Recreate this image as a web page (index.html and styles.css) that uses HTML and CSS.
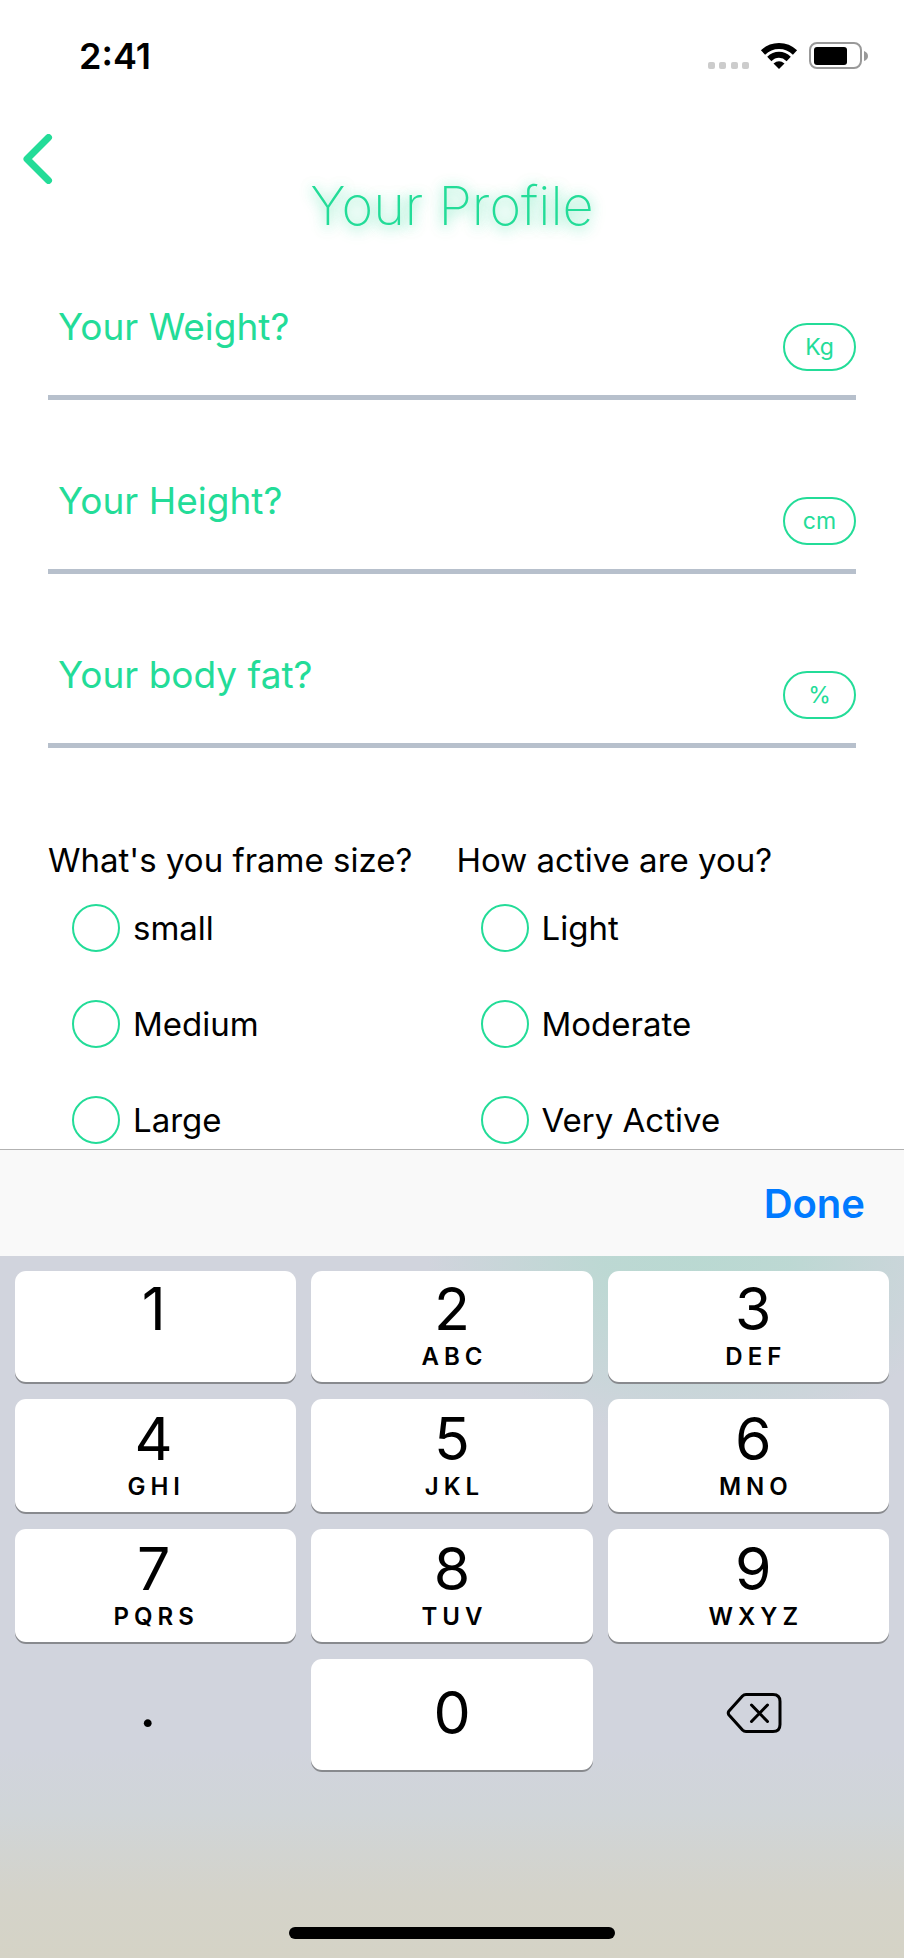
FILE: index.html
```html
<!DOCTYPE html>
<html lang="en">
<head>
<meta charset="utf-8">
<meta name="viewport" content="width=device-width, initial-scale=1">
<title>Your Profile</title>
<link rel="stylesheet" href="styles.css">
</head>
<body>
<div class="screen">
  <header class="status-bar">
    <time class="clock">2:41</time>
    <div class="status-icons">
      <svg class="signal" viewBox="0 0 41 7" width="41" height="7" aria-hidden="true">
        <rect width="7" height="7" rx="2"/><rect x="11" width="7" height="7" rx="2"/><rect x="23" width="7" height="7" rx="2"/><rect x="34" width="7" height="7" rx="2"/>
      </svg>
      <svg class="wifi" viewBox="0 0 38 28" width="38" height="28" aria-hidden="true">
        <path class="wave" d="M3 10.5C12 1.8 26 1.8 35 10.5"/>
        <path class="wave" d="M9.3 17C15 11.4 23 11.4 28.700 17"/>
        <path d="M13.500 21.500Q19 17 24.500 21.500L19 27Z"/>
      </svg>
      <svg class="battery" viewBox="0 0 60 28" width="60" height="28" aria-hidden="true">
        <rect class="shell" x="1" y="1" width="51" height="25" rx="7"/>
        <rect x="5" y="5" width="33" height="18" rx="3"/>
        <path class="nub" d="M55 9Q59 10.500 59 14T55 19Z"/>
      </svg>
    </div>
  </header>

  <main class="content">
    <nav class="nav">
      <button class="back" type="button" aria-label="Back">
        <svg viewBox="0 0 30 50" width="30" height="50" aria-hidden="true"><path d="M25.500 3.500L4 25L25.500 46.500"/></svg>
      </button>
    </nav>
    <h1 class="title">Your Profile</h1>

    <form class="form">
      <div class="field">
        <div class="entry">
          <label for="weight">Your Weight?</label>
          <input id="weight" type="text" inputmode="decimal">
        </div>
        <button class="unit" type="button">Kg</button>
      </div>
      <div class="field">
        <div class="entry">
          <label for="height">Your Height?</label>
          <input id="height" type="text" inputmode="decimal">
        </div>
        <button class="unit" type="button">cm</button>
      </div>
      <div class="field">
        <div class="entry">
          <label for="fat">Your body fat?</label>
          <input id="fat" type="text" inputmode="decimal">
        </div>
        <button class="unit" type="button">%</button>
      </div>

      <div class="choices">
        <fieldset class="group">
          <legend>What's you frame size?</legend>
          <label class="option"><input type="radio" name="frame" value="small">small</label>
          <label class="option"><input type="radio" name="frame" value="medium">Medium</label>
          <label class="option"><input type="radio" name="frame" value="large">Large</label>
        </fieldset>
        <fieldset class="group">
          <legend>How active are you?</legend>
          <label class="option"><input type="radio" name="activity" value="light">Light</label>
          <label class="option"><input type="radio" name="activity" value="moderate">Moderate</label>
          <label class="option"><input type="radio" name="activity" value="very">Very Active</label>
        </fieldset>
      </div>
    </form>
  </main>

  <section class="keyboard" aria-label="Keyboard">
    <div class="toolbar"><button class="done" type="button">Done</button></div>
    <div class="keys">
      <button class="key" type="button"><span class="digit">1</span><span class="letters"></span></button>
      <button class="key" type="button"><span class="digit">2</span><span class="letters">ABC</span></button>
      <button class="key" type="button"><span class="digit">3</span><span class="letters">DEF</span></button>
      <button class="key" type="button"><span class="digit">4</span><span class="letters">GHI</span></button>
      <button class="key" type="button"><span class="digit">5</span><span class="letters">JKL</span></button>
      <button class="key" type="button"><span class="digit">6</span><span class="letters">MNO</span></button>
      <button class="key" type="button"><span class="digit">7</span><span class="letters">PQRS</span></button>
      <button class="key" type="button"><span class="digit">8</span><span class="letters">TUV</span></button>
      <button class="key" type="button"><span class="digit">9</span><span class="letters">WXYZ</span></button>
      <button class="key plain point" type="button"><span class="digit">.</span></button>
      <button class="key single" type="button"><span class="digit">0</span></button>
      <button class="key plain" type="button" aria-label="Delete">
        <svg class="delete" viewBox="0 0 56 42" width="56" height="42" aria-hidden="true">
          <path d="M20 2.500H47Q54 2.500 54 9.500V32.500Q54 39.500 47 39.500H20Q18 39.500 16.500 38L3 23Q1.500 21 3 19L16.500 4Q18 2.500 20 2.500Z"/>
          <path d="M25.500 13L41.500 29.500M41.500 13L25.500 29.500"/>
        </svg>
      </button>
    </div>
    <div class="home-indicator"></div>
  </section>
</div>
</body>
</html>
```

FILE: styles.css
```css
* {
  box-sizing: border-box;
}

:root {
  --green: #23dc98;
  --line: #b7c0cc;
}

body {
  margin: 0;
  background: #fff;
  color: #000;
  font-family: Inter, "Liberation Sans", sans-serif;
}

button,
input {
  margin: 0;
  padding: 0;
  border: 0;
  background: none;
  color: inherit;
  font: inherit;
}

svg {
  display: block;
}

.screen {
  display: flex;
  flex-direction: column;
  min-height: 100vh;
}

.status-bar {
  display: flex;
  justify-content: space-between;
  align-items: center;
  height: 112px;
  padding: 0 35px 0 79px;
}

.clock {
  font-size: 36px;
  font-weight: 600;
  line-height: 44px;
}

.status-icons {
  display: flex;
  align-items: flex-end;
  gap: 11px;
}

.signal {
  margin-bottom: 1px;
  fill: #ccc;
}

.wave {
  fill: none;
  stroke: #000;
  stroke-width: 6;
}

.battery .shell {
  fill: none;
  stroke: #999;
  stroke-width: 2;
}

.battery .nub {
  fill: #999;
}

.nav {
  display: flex;
  padding: 22px 23px 0;
}

.back path {
  fill: none;
  stroke: var(--green);
  stroke-width: 7;
  stroke-linecap: round;
  stroke-linejoin: round;
}

.title {
  margin: -12px 0 0;
  color: var(--green);
  font-size: 54px;
  font-weight: 200;
  line-height: 68px;
  text-align: center;
  text-shadow: 0 2px 12px rgba(35, 220, 152, 0.5), 0 3px 16px rgba(35, 220, 152, 0.4);
}

.form {
  display: flex;
  flex-direction: column;
  gap: 77px;
  padding: 63px 48px 5px;
}

.field {
  display: flex;
  align-items: flex-end;
  border-bottom: 5px solid var(--line);
}

.entry {
  display: flex;
  flex: 1;
  flex-direction: column;
  min-width: 0;
  padding-left: 10px;
  color: var(--green);
  font-size: 37px;
}

.entry label {
  line-height: 48px;
}

.entry input {
  width: 100%;
  height: 44px;
  outline: 0;
}

.unit {
  width: 73px;
  height: 48px;
  margin-bottom: 24px;
  border: 2px solid var(--green);
  border-radius: 24px;
  color: var(--green);
  font-size: 23px;
}

.choices {
  display: grid;
  grid-template-columns: 1fr 1fr;
  column-gap: 9px;
  margin-top: 15px;
  font-size: 33px;
}

.group {
  display: flex;
  flex-direction: column;
  gap: 48px;
  min-width: 0;
  margin: 0;
  padding: 0;
  border: 0;
}

.group legend {
  padding: 0 0 24px;
  line-height: 40px;
}

.option {
  display: flex;
  align-items: center;
  gap: 13px;
  padding-left: 24px;
  line-height: 48px;
}

.option input {
  appearance: none;
  width: 48px;
  height: 48px;
  border: 2px solid var(--green);
  border-radius: 50%;
}

.option input:checked {
  background: var(--green);
}

.keyboard {
  display: flex;
  flex: 1;
  flex-direction: column;
  background:
    radial-gradient(ellipse 270px 190px at 77% 100px, rgba(180, 218, 207, 0.8), rgba(180, 218, 207, 0.7) 35%, rgba(180, 218, 207, 0)),
    linear-gradient(#d1d4dd 0, #d1d4dd 600px, #d0d5d8 665px, #d4d3ca 745px, #d5d3c6 100%);
}

.toolbar {
  display: flex;
  justify-content: flex-end;
  align-items: center;
  height: 107px;
  padding: 0 39px;
  border-top: 1px solid #b2b2b2;
  background: #f9f9f9;
}

.done {
  color: #007aff;
  font-size: 40px;
  font-weight: 600;
}

.keys {
  display: grid;
  grid-template-columns: repeat(3, 1fr);
  grid-template-rows: 111px 113px 113px 111px;
  gap: 17px 15px;
  padding: 15px;
}

.key {
  display: flex;
  flex-direction: column;
  align-items: center;
  justify-content: flex-end;
  padding-bottom: 11px;
  border-radius: 11px;
  background: #fff;
  box-shadow: 0 2px 0 #888a8e;
}

.key:nth-child(3n) {
  padding-left: 10px;
}

.key:nth-child(3n + 1) {
  padding-right: 4px;
}

.digit {
  font-size: 59px;
  line-height: 68px;
}

.letters {
  min-height: 28px;
  padding-left: 5px;
  font-size: 24px;
  font-weight: 600;
  line-height: 28px;
  letter-spacing: 5px;
}

.single,
.plain {
  justify-content: center;
  padding-bottom: 4px;
}

.plain {
  background: none;
  box-shadow: none;
}

.plain:nth-child(3n) {
  padding-left: 12px;
}

.key.point {
  padding-right: 16px;
  padding-bottom: 17px;
}

.delete {
  fill: none;
  stroke: #000;
  stroke-width: 3;
  stroke-linecap: round;
  stroke-linejoin: round;
}

.home-indicator {
  align-self: center;
  width: 36%;
  height: 12px;
  margin: auto 0 19px;
  border-radius: 6px;
  background: #000;
}
```
